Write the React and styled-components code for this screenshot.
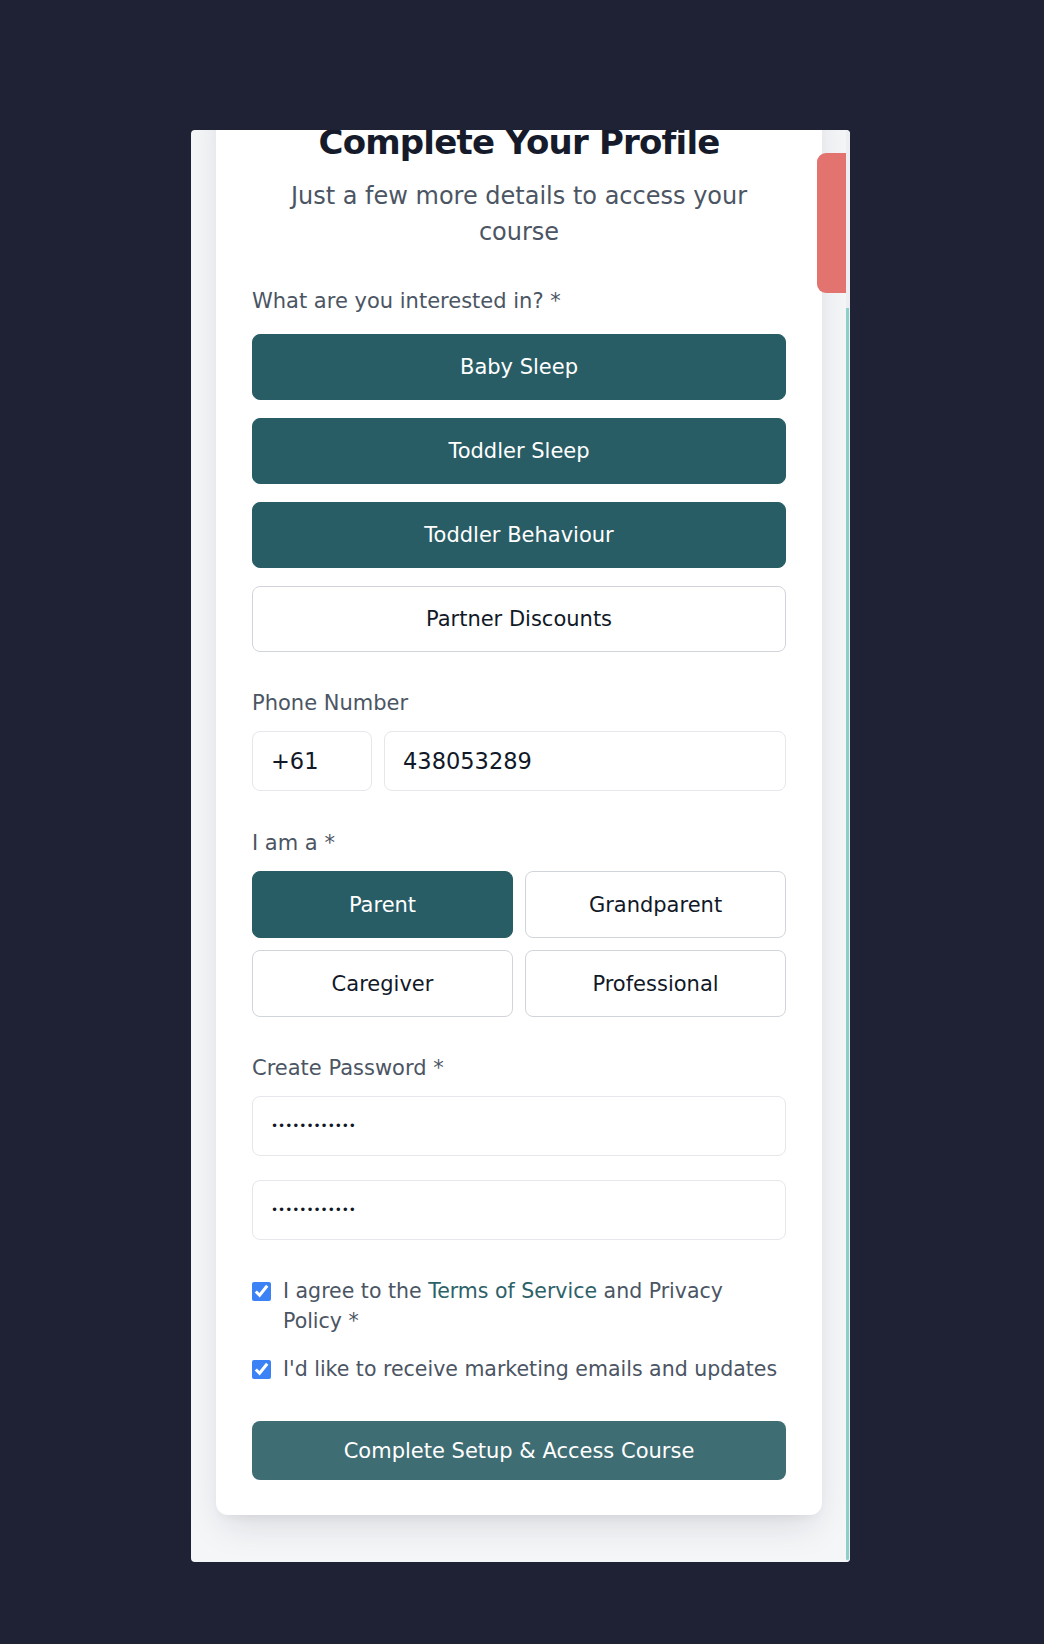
import React from 'react';
import styled, { createGlobalStyle } from 'styled-components';

const GlobalStyle = createGlobalStyle`
  html, body { margin: 0; padding: 0; background: #1e2234; }
  body { font-family: "DejaVu Sans", "Liberation Sans", sans-serif; }
  *, *::before, *::after { box-sizing: border-box; }
`;

const Page = styled.div`
  min-height: 1644px;
  padding: 130px 0 0 191px;
`;

const Preview = styled.div`
  position: relative;
  width: 659px;
  height: 1432px;
  background: #f5f6f8;
  border-radius: 4px;
  overflow: hidden;
  display: flex;
  flex-direction: column;
  justify-content: flex-end;
  padding: 0 0 47px 25px;
`;

const Card = styled.div`
  flex-shrink: 0;
  width: 606px;
  background: #ffffff;
  border-radius: 12px;
  padding: 36px 36px 35px;
  box-shadow: 0 15px 36px -6px rgba(15, 23, 42, 0.13), 0 6px 12px -6px rgba(15, 23, 42, 0.08);
`;

const Title = styled.h1`
  margin: 0 0 12px;
  font-size: 34px;
  line-height: 48px;
  font-weight: 700;
  letter-spacing: -0.8px;
  text-align: center;
  color: #161b2b;
`;

const Subtitle = styled.p`
  margin: 0 0 36px;
  font-size: 24px;
  line-height: 36px;
  text-align: center;
  color: #4b5563;
`;

const Field = styled.div`
  margin-bottom: ${(p) => p.$mb ?? 36}px;
`;

const Label = styled.div`
  font-size: 21px;
  line-height: 30px;
  color: #4b5563;
  margin-bottom: ${(p) => p.$mb ?? 13}px;
`;

const Stack = styled.div`
  display: flex;
  flex-direction: column;
  gap: ${(p) => p.$gap}px;
`;

const Grid = styled.div`
  display: grid;
  grid-template-columns: 1fr 1fr;
  gap: 12px;
`;

const Choice = styled.button`
  height: ${(p) => p.$h}px;
  width: 100%;
  border-radius: 8px;
  border: 1px solid ${(p) => (p.$selected ? '#295d66' : '#d1d5db')};
  background: ${(p) => (p.$selected ? '#295d66' : '#ffffff')};
  color: ${(p) => (p.$selected ? '#ffffff' : '#111827')};
  font-family: inherit;
  font-size: 21px;
  font-weight: 500;
  display: flex;
  align-items: center;
  justify-content: center;
  padding: 0;
  cursor: pointer;
`;

const PhoneRow = styled.div`
  display: grid;
  grid-template-columns: 120px 1fr;
  gap: 12px;
`;

const TextInput = styled.input`
  height: 60px;
  width: 100%;
  border: 1px solid #e5e7eb;
  border-radius: 8px;
  background: #ffffff;
  padding: 0 18px;
  font-family: inherit;
  font-size: ${(p) => (p.type === 'password' ? 12 : 22.5)}px;
  color: #111827;
  outline: none;
`;

const CheckRow = styled.label`
  display: flex;
  align-items: flex-start;
  gap: 12px;
  font-size: 20.5px;
  line-height: 30px;
  color: #4b5563;
`;

const Check = styled.input`
  flex-shrink: 0;
  width: 19px;
  height: 19px;
  margin: 5.5px 0 0;
  accent-color: #3b82f6;
`;

const Link = styled.a`
  color: #2d6168;
  text-decoration: none;
`;

const Submit = styled.button`
  width: 100%;
  height: 59px;
  border: none;
  border-radius: 8px;
  background: #3f6d74;
  color: #ffffff;
  font-family: inherit;
  font-size: 21px;
  font-weight: 500;
  cursor: pointer;
`;

const FeedbackTab = styled.div`
  position: absolute;
  top: 23px;
  right: 4px;
  width: 29px;
  height: 140px;
  background: #e2736e;
  border-radius: 9px 0 0 9px;
`;

const ScrollTrack = styled.div`
  position: absolute;
  top: 0;
  right: 0;
  bottom: 0;
  width: 4px;
  background: #eceef1;
`;

const ScrollThumb = styled.div`
  position: absolute;
  top: 178px;
  bottom: 2px;
  left: 0;
  width: 3px;
  background: #8ecfca;
  border-radius: 0 0 2px 2px;
`;

const interests = [
  { label: 'Baby Sleep', on: true },
  { label: 'Toddler Sleep', on: true },
  { label: 'Toddler Behaviour', on: true },
  { label: 'Partner Discounts', on: false },
];

const roles = [
  { label: 'Parent', on: true },
  { label: 'Grandparent', on: false },
  { label: 'Caregiver', on: false },
  { label: 'Professional', on: false },
];

export default function App() {
  return (
    <>
      <GlobalStyle />
      <Page>
        <Preview>
          <Card>
            <Title>Complete Your Profile</Title>
            <Subtitle>Just a few more details to access your course</Subtitle>

            <Field>
              <Label $mb={18}>What are you interested in? *</Label>
              <Stack $gap={18}>
                {interests.map((i) => (
                  <Choice key={i.label} type="button" $h={66} $selected={i.on}>
                    {i.label}
                  </Choice>
                ))}
              </Stack>
            </Field>

            <Field $mb={37}>
              <Label>Phone Number</Label>
              <PhoneRow>
                <TextInput type="text" readOnly defaultValue="+61" />
                <TextInput type="tel" readOnly defaultValue="438053289" />
              </PhoneRow>
            </Field>

            <Field>
              <Label>I am a *</Label>
              <Grid>
                {roles.map((r) => (
                  <Choice key={r.label} type="button" $h={67} $selected={r.on}>
                    {r.label}
                  </Choice>
                ))}
              </Grid>
            </Field>

            <Field>
              <Label>Create Password *</Label>
              <Stack $gap={24}>
                <TextInput type="password" readOnly defaultValue="abcdefghijkl" />
                <TextInput type="password" readOnly defaultValue="abcdefghijkl" />
              </Stack>
            </Field>

            <Field $mb={37}>
              <Stack $gap={18}>
                <CheckRow>
                  <Check type="checkbox" defaultChecked />
                  <span>
                    I agree to the <Link href="#terms">Terms of Service</Link> and Privacy Policy *
                  </span>
                </CheckRow>
                <CheckRow>
                  <Check type="checkbox" defaultChecked />
                  <span>I'd like to receive marketing emails and updates</span>
                </CheckRow>
              </Stack>
            </Field>

            <Submit type="button">Complete Setup &amp; Access Course</Submit>
          </Card>
          <FeedbackTab />
          <ScrollTrack>
            <ScrollThumb />
          </ScrollTrack>
        </Preview>
      </Page>
    </>
  );
}
